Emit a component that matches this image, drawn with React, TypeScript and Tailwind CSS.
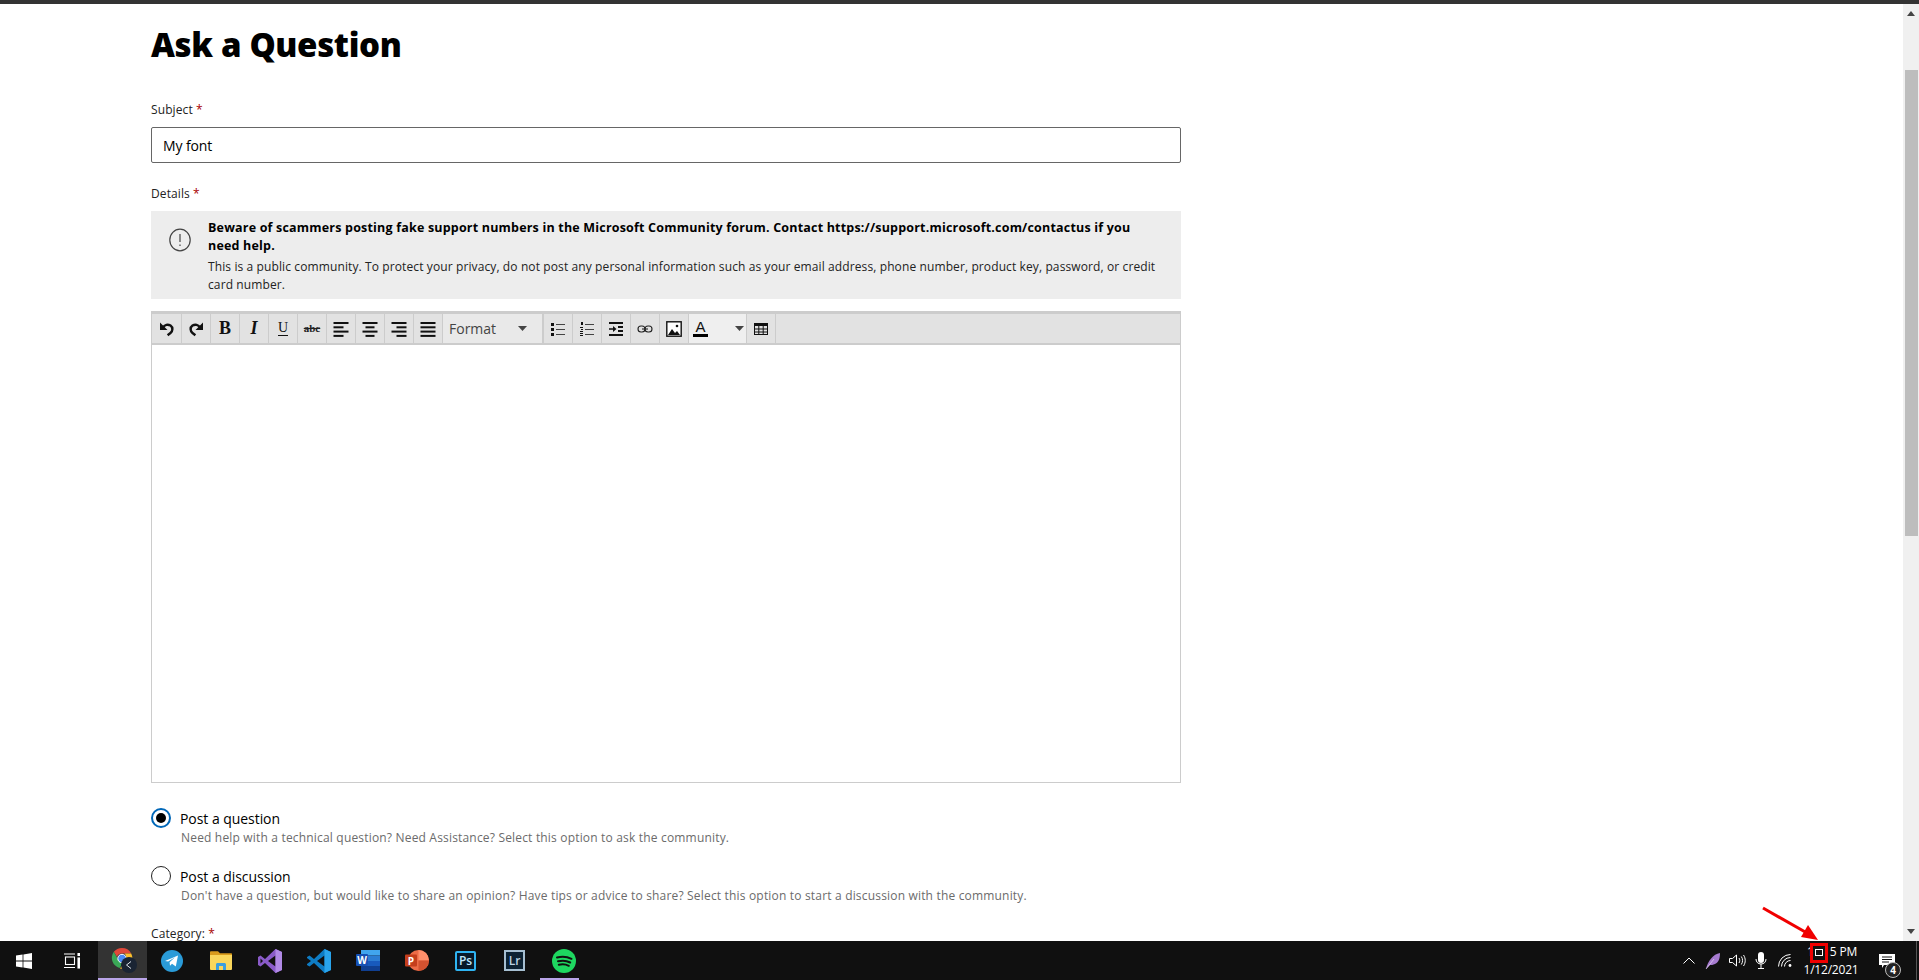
const Btn = ({ children, className = "" }: { children?: React.ReactNode; className?: string }) => (
  <div className={"flex h-full w-[29px] shrink-0 items-center justify-center border-r border-[#cccccc] " + className}>{children}</div>
);

const Caret = () => (
  <svg width="9" height="5" viewBox="0 0 10 6" preserveAspectRatio="none"><path d="M0 0h10L5 6z" fill="#444" /></svg>
);

const AlignIcon = ({ lines }: { lines: number[][] }) => (
  <svg width="16" height="16" viewBox="0 0 16 16" fill="#111">
    {lines.map((l, i) => (
      <rect key={i} x={l[0]} y={1 + i * 4.3} width={l[1]} height="2" />
    ))}
  </svg>
);

const Undo = ({ flip }: { flip?: boolean }) => (
  <svg width="16" height="16" viewBox="0 0 16 16" className={flip ? "-scale-x-100" : ""}>
    <path d="M1 1.500v7.500h7.500z" fill="#111" />
    <path d="M4 6.500C5.500 3.500 9 3 11.500 4.600c2.600 1.800 2.400 5.600 0 7.400L8.600 14.200" fill="none" stroke="#111" strokeWidth="2.400" />
  </svg>
);

const Toolbar = () => (
  <div className="flex h-[33px] items-center border-y-2 border-[#cccccc] bg-[#e2e2e2] pl-px">
    <Btn><Undo /></Btn>
    <Btn><Undo flip /></Btn>
    <Btn><span className="font-['Liberation_Serif',serif] text-[18px] font-bold text-[#111]">B</span></Btn>
    <Btn><span className="font-['Liberation_Serif',serif] text-[18px] font-bold italic text-[#111]">I</span></Btn>
    <Btn><span className="border-b border-[#111] font-['Liberation_Serif',serif] text-[14px] leading-[14px] text-[#111]">U</span></Btn>
    <Btn><span className="font-['Liberation_Serif',serif] text-[11px] font-bold text-[#222] line-through">abc</span></Btn>
    <Btn><AlignIcon lines={[[0.5, 15], [0.5, 10], [0.5, 15], [0.5, 10]]} /></Btn>
    <Btn><AlignIcon lines={[[0.5, 15], [3.5, 9], [0.5, 15], [3.5, 9]]} /></Btn>
    <Btn><AlignIcon lines={[[0.5, 15], [5.5, 10], [0.5, 15], [5.5, 10]]} /></Btn>
    <Btn><AlignIcon lines={[[0.5, 15], [0.5, 15], [0.5, 15], [0.5, 15]]} /></Btn>
    <div className="flex h-full w-[101px] shrink-0 items-center justify-between border-r-2 border-[#cccccc] bg-[#e9e9e9] pl-[6px] pr-[15px] text-[14px] text-[#444]">
      <span>Format</span>
      <Caret />
    </div>
    <Btn>
      <svg width="16" height="16" viewBox="0 0 16 16" fill="#111">
        <rect x="1" y="2" width="3" height="3" /><rect x="1" y="7" width="3" height="3" /><rect x="1" y="12" width="3" height="3" />
        <rect x="6" y="3" width="9" height="1" fill="#444" /><rect x="6" y="8" width="9" height="1" fill="#444" /><rect x="6" y="13" width="9" height="1" fill="#444" />
      </svg>
    </Btn>
    <Btn>
      <svg width="16" height="16" viewBox="0 0 16 16" fill="#111">
        <rect x="2" y="1" width="2" height="3" /><rect x="1" y="6" width="3" height="1" /><rect x="2" y="8" width="2" height="1" /><rect x="1" y="10" width="3" height="1" /><rect x="1" y="12" width="3" height="1" /><rect x="1" y="14" width="3" height="1" />
        <rect x="6" y="3" width="9" height="1" fill="#444" /><rect x="6" y="8" width="9" height="1" fill="#444" /><rect x="6" y="13" width="9" height="1" fill="#444" />
      </svg>
    </Btn>
    <Btn>
      <svg width="16" height="16" viewBox="0 0 16 16" fill="#111">
        <rect x="1" y="1" width="14" height="2" /><rect x="1" y="13" width="14" height="2" />
        <rect x="10" y="5" width="5" height="2" /><rect x="10" y="9" width="5" height="2" />
        <path d="M1 7.200h4V5l3.500 3L5 11V8.800H1z" />
      </svg>
    </Btn>
    <Btn>
      <svg width="16" height="16" viewBox="0 0 16 16" fill="none" stroke="#222" strokeWidth="1.100">
        <rect x="1" y="5" width="7" height="6" rx="3" /><rect x="8" y="5" width="7" height="6" rx="3" /><path d="M5 8h6" />
      </svg>
    </Btn>
    <Btn>
      <svg width="16" height="16" viewBox="0 0 16 16">
        <rect x="0.800" y="0.800" width="14.400" height="14.400" fill="#fff" stroke="#111" strokeWidth="1.400" />
        <path d="M2 14l4-6 3 4 2-2 3 4z" fill="#111" /><circle cx="11" cy="5" r="1.300" fill="#111" />
      </svg>
    </Btn>
    <div className="flex h-full w-[58px] shrink-0 items-center justify-between border-r border-[#cccccc] bg-[#efefef] pl-[4px] pr-[2px]">
      <span className="flex flex-col items-center leading-none">
        <span className="font-['Liberation_Sans',sans-serif] text-[15px] leading-[13px] text-[#111]">A</span>
        <span className="mt-[1px] h-[3px] w-[15px] bg-black" />
      </span>
      <Caret />
    </div>
    <Btn>
      <svg width="16" height="16" viewBox="0 0 16 16" fill="none" stroke="#111">
        <rect x="1.500" y="2.500" width="13" height="11" /><rect x="1" y="2" width="14" height="3" fill="#111" stroke="none" />
        <path d="M1.500 8h13M1.500 11h13M5.800 5v8M10.200 5v8" />
      </svg>
    </Btn>
  </div>
);

const Radio = ({ on, title, desc, className }: { on?: boolean; title: string; desc: string; className: string }) => (
  <div className={className}>
    <div className="flex items-center gap-[9px]">
      <span className={"flex h-5 w-5 items-center justify-center rounded-full border " + (on ? "border-2 border-[#0067b8]" : "border-[#222]")}>
        {on && <span className="h-[10px] w-[10px] rounded-full bg-black" />}
      </span>
      <span className="h-5 text-[14px] leading-[22px] tracking-[-0.05px] text-black">{title}</span>
    </div>
    <p className="ml-[30px] mt-[2px] text-[12px] leading-4 tracking-[0.18px] text-[#6b6b6b]">{desc}</p>
  </div>
);

const TaskIcon = ({ children, className = "" }: { children: React.ReactNode; className?: string }) => (
  <div className={"flex h-full w-[49px] shrink-0 items-center justify-center " + className}>{children}</div>
);

const Taskbar = () => (
  <div className="flex h-[39px] shrink-0 items-stretch bg-[#101010]">
    <div className="flex w-12 items-center justify-center">
      <svg width="16" height="16" viewBox="0 0 16 16" fill="#fff"><path d="M0 2.400l6.600-.9v6.100H0zM7.400 1.400L16 0v7.600H7.400zM0 8.400h6.600v6.100L0 13.600zM7.400 8.400H16V16l-8.600-1.400z" /></svg>
    </div>
    <div className="flex w-[50px] items-center justify-center pr-[3px]">
      <svg width="16" height="16" viewBox="0 0 16 16" fill="none" stroke="#fff" strokeWidth="1.100">
        <rect x="1.500" y="4" width="9" height="7.500" /><path d="M0 1h11M0 14.500h11" /><rect x="14" y="0.500" width="1.600" height="2" fill="#fff" /><rect x="14" y="5" width="1.600" height="10" fill="#fff" />
      </svg>
    </div>
    <TaskIcon className="border-b-2 border-[#b9a4e8] bg-[#333333]">
      <svg width="30" height="30" viewBox="0 0 30 30" className="ml-[2px]">
        <path d="M13 3a10.500 10.500 0 0 1 9.200 5.400H13a5 5 0 0 0-5 3.600L4.800 6.800A10.500 10.500 0 0 1 13 3z" fill="#e0483a" />
        <path d="M4.800 6.800 9.600 15.600a5 5 0 0 0 4 2.300l-3 5.100A10.500 10.500 0 0 1 4.800 6.800z" fill="#3aa757" />
        <path d="M22.200 8.400A10.500 10.500 0 0 1 11 23.500l5-8a5 5 0 0 0-.6-7.100z" fill="#fbc02d" />
        <circle cx="13" cy="13.500" r="4.200" fill="#4a8af4" stroke="#fff" strokeWidth="1" />
        <circle cx="20" cy="20" r="8" fill="#1a2433" />
        <path d="M22 16.500l-4.500 3.500 4.500 3.500" fill="none" stroke="#dfe6ee" strokeWidth="1" />
      </svg>
    </TaskIcon>
    <TaskIcon>
      <svg width="22" height="22" viewBox="0 0 22 22">
        <circle cx="11" cy="11" r="11" fill="#2a9bd8" />
        <path d="M4 11l13-5.500-2.200 11-3.800-2.800-2 2-.4-3.400 5.400-5-6.800 4.200z" fill="#fff" />
      </svg>
    </TaskIcon>
    <TaskIcon>
      <svg width="22" height="19" viewBox="0 0 22 19">
        <path d="M0 1.500C0 .8.500.3 1 .3h7l2 2h11c.600 0 1 .4 1 1V6H0z" fill="#d99b1c" />
        <path d="M0 4h22v14a1 1 0 0 1-1 1H1a1 1 0 0 1-1-1z" fill="#f9d65b" />
        <path d="M6 19v-5.500c0-1 .8-1.500 1.500-1.500h7c.8 0 1.500.6 1.500 1.500V19h-3v-4H9v4z" fill="#3b9ede" />
      </svg>
    </TaskIcon>
    <TaskIcon>
      <svg width="24" height="24" viewBox="0 0 24 24">
        <path d="M17.500 0 24 3v18l-6.500 3L7 14l-4.500 3.500L0 16V8l2.500-1.500L7 10z" fill="#8a5bc9" />
        <path d="M17.500 6.500v11L10 12z" fill="#101010" />
        <path d="M17.500 0 24 3v18l-6.500 3z" fill="#b18ae6" />
        <path d="M2.500 9.500v5L5 12z" fill="#101010" />
      </svg>
    </TaskIcon>
    <TaskIcon>
      <svg width="24" height="24" viewBox="0 0 24 24">
        <path d="M17.500 0 24 3v18l-6.500 3L7 14l-4.500 3.500L0 16v-1l4-3-4-3V8l2.500-1.500L7 10z" fill="#0e7cc4" />
        <path d="M17.500 6.500v11L10 12z" fill="#101010" />
        <path d="M17.500 0 24 3v18l-6.500 3z" fill="#29a4ec" />
      </svg>
    </TaskIcon>
    <TaskIcon>
      <svg width="24" height="21" viewBox="0 0 24 21">
        <rect x="5" y="0" width="19" height="5.500" fill="#41a5ee" /><rect x="5" y="5.500" width="19" height="5.500" fill="#2b7cd3" />
        <rect x="5" y="11" width="19" height="5" fill="#185abd" /><rect x="5" y="16" width="19" height="5" fill="#103f91" />
        <rect x="0" y="4" width="12" height="12" rx="1" fill="#1650b4" />
        <text x="6" y="14" textAnchor="middle" fontSize="10" fontWeight="700" fill="#fff" fontFamily="Open Sans">W</text>
      </svg>
    </TaskIcon>
    <TaskIcon>
      <svg width="24" height="21" viewBox="0 0 24 21">
        <circle cx="13.500" cy="10.500" r="10.500" fill="#ed6c47" /><path d="M13.500 0A10.500 10.500 0 0 1 24 10.500H13.500z" fill="#ff8f6b" /><path d="M13.500 10.500H24A10.500 10.500 0 0 1 13.500 21z" fill="#d35230" />
        <rect x="0" y="4.500" width="12" height="12" rx="1" fill="#c43e1c" />
        <text x="6" y="14.500" textAnchor="middle" fontSize="10" fontWeight="700" fill="#fff" fontFamily="Open Sans">P</text>
      </svg>
    </TaskIcon>
    <TaskIcon>
      <div className="flex h-5 w-[21px] items-center justify-center rounded-[2px] border-2 border-[#2fb4f2] bg-[#06182a] text-[12px] font-semibold text-[#bfe6fb]">Ps</div>
    </TaskIcon>
    <TaskIcon>
      <div className="flex h-[21px] w-[21px] items-center justify-center border-2 border-[#a6bfd1] bg-[#0c2233] text-[12px] font-semibold text-[#bcd2e2]">Lr</div>
    </TaskIcon>
    <TaskIcon className="relative">
      <span className="absolute bottom-0 left-[1px] right-[9px] h-[2px] bg-[#b9a4e8]" />
      <svg width="24" height="24" viewBox="0 0 24 24">
        <circle cx="12" cy="12" r="12" fill="#1ed760" />
        <path d="M5 8.500c5-1.400 10-1 14.500 1.300M6 12.300c4.300-1.100 8.500-.8 12.200 1.200M6.800 15.800c3.500-.9 7-.6 10 1" fill="none" stroke="#101010" strokeWidth="2" strokeLinecap="round" />
      </svg>
    </TaskIcon>

    <div className="ml-auto flex items-center text-white">
      <div className="flex w-6 justify-center">
        <svg width="12" height="7" viewBox="0 0 12 7" fill="none" stroke="#fff" strokeWidth="1"><path d="M.5 6.500 6 1l5.500 5.500" /></svg>
      </div>
      <div className="flex w-6 justify-center">
        <svg width="16" height="18" viewBox="0 0 16 18"><path d="M1 17C3 9 8 2 15 1c0 5-1 9-5 11-2 1-4 1-5 1z" fill="#a67bd0" /><path d="M1 17 9 7" stroke="#e6d9f2" strokeWidth=".7" /></svg>
      </div>
      <div className="flex w-6 justify-center">
        <svg width="17" height="13" viewBox="0 0 17 13" fill="none" stroke="#fff" strokeWidth="1"><path d="M.5 4.500h3L7.500 1v11l-4-3.500h-3zM10 4c1 1.500 1 3.500 0 5M12.300 2.500c1.700 2.500 1.700 5.500 0 8M14.500 1c2.300 3.400 2.300 7.600 0 11" /></svg>
      </div>
      <div className="flex w-6 justify-center">
        <svg width="12" height="17" viewBox="0 0 12 17"><rect x="3" y="0" width="6" height="11" rx="3" fill="#fff" /><path d="M1 7c0 3 2 5 5 5s5-2 5-5M6 12v4M3 16.500h6" fill="none" stroke="#fff" /></svg>
      </div>
      <div className="flex w-6 justify-center">
        <svg width="15" height="13" viewBox="0 0 15 13" fill="none" stroke="#fff" strokeWidth="1"><path d="M.5 12.500A12 12 0 0 1 12.500.5M3.500 12.500a9 9 0 0 1 9-9M6.500 12.500a6 6 0 0 1 6-6" /><circle cx="12" cy="11.500" r="1.400" fill="#fff" stroke="none" /></svg>
      </div>
      <div className="relative ml-[2px] w-[64px] text-center text-[12px] leading-[18px] tracking-[-0.2px]">
        <div className="pl-[2px]">11:15 PM</div>
        <div>1/12/2021</div>
        <div className="absolute left-[11px] top-[0px] flex h-5 w-[18px] items-center justify-center border-[3px] border-[#f00000] bg-[#101010]">
          <span className="h-[7px] w-2 border border-white" />
        </div>
      </div>
      <div className="relative flex w-[53px] justify-center pr-[5px]">
        <svg width="16" height="14" viewBox="0 0 16 14"><path d="M0 0h16v11H5l-2 3v-3H0z" fill="#fff" /><path d="M3 3h10M3 5.500h10M3 8h7" stroke="#101010" /></svg>
        <span className="absolute left-[22px] top-[8px] flex h-4 w-4 items-center justify-center rounded-full border border-[#bbb] bg-[#222] text-[10px] font-bold leading-none text-white">4</span>
      </div>
      <span className="mr-[2px] h-full w-px bg-[#555]" />
    </div>
  </div>
);

export default function App() {
  return (
    <div className="relative flex h-[980px] flex-col overflow-hidden bg-white font-['Open_Sans',sans-serif] text-black">
      <div className="h-1 shrink-0 bg-[#333333]" />
      <div className="flex min-h-0 flex-1">
        <main className="min-w-0 flex-1 overflow-hidden pl-[151px]">
          <div className="w-[1030px]">
            <h1 className="mt-[21px] h-10 text-[33px] font-extrabold leading-10 tracking-[-0.35px]">Ask a Question</h1>
            <label className="mt-[36px] block text-[12px] leading-[18px] tracking-[0.1px] text-[#222]">
              Subject <span className="text-[#a80000]">*</span>
            </label>
            <div className="mt-[8px] flex h-9 items-center rounded-[2px] border border-[#666] pl-[11px] text-[14px] tracking-[-0.1px]">My font</div>
            <label className="mt-[22px] block text-[12px] leading-[18px] tracking-[0.1px] text-[#222]">
              Details <span className="text-[#a80000]">*</span>
            </label>
            <div className="mt-[8px] flex h-[88px] bg-[#ededed] pt-2">
              <div className="flex w-[57px] shrink-0 justify-center pt-[9px]">
                <svg width="22" height="24" viewBox="0 0 22 24" fill="none" stroke="#444" strokeWidth="1.200">
                  <ellipse cx="11" cy="12" rx="10.200" ry="10.800" /><path d="M11 6v8" /><path d="M11 16.500v1.500" />
                </svg>
              </div>
              <div className="pr-5 text-[12px] leading-[18px]">
                <p className="pr-[8px] text-[12.5px] font-bold tracking-[0.19px]">
                  Beware of scammers posting fake support numbers in the Microsoft Community forum. Contact https://support.microsoft.com/contactus if you need help.
                </p>
                <p className="mt-[3px] tracking-[0.11px] text-[#222]">
                  This is a public community. To protect your privacy, do not post any personal information such as your email address, phone number, product key, password, or credit card number.
                </p>
              </div>
            </div>
            <div className="mt-3 flex h-[472px] flex-col border border-[#cccccc]">
              <Toolbar />
            </div>
            <Radio
              on
              className="mt-[25px]"
              title="Post a question"
              desc="Need help with a technical question? Need Assistance? Select this option to ask the community."
            />
            <Radio
              className="mt-5"
              title="Post a discussion"
              desc="Don't have a question, but would like to share an opinion? Have tips or advice to share? Select this option to start a discussion with the community."
            />
            <label className="mt-[21px] block text-[12px] leading-[18px] tracking-[0.1px] text-[#222]">
              Category: <span className="text-[#a80000]">*</span>
            </label>
          </div>
        </main>
        <div className="flex w-4 shrink-0 flex-col items-center bg-[#f0f0f0] pt-[7px]">
          <svg width="8" height="5" viewBox="0 0 8 5" className="shrink-0"><path d="M0 5h8L4 0z" fill="#444" /></svg>
          <div className="ml-px mt-[54px] h-[466px] w-[13px] shrink-0 bg-[#bdbdbd]" />
          <svg width="8" height="5" viewBox="0 0 8 5" className="mb-[7px] mt-auto shrink-0"><path d="M0 0h8L4 5z" fill="#444" /></svg>
        </div>
      </div>
      <Taskbar />
      {/* annotation arrow */}
      <svg className="pointer-events-none absolute left-[1755px] top-[900px]" width="70" height="45" viewBox="0 0 70 45">
        <path d="M8 8 52 33" stroke="#f00000" strokeWidth="3" fill="none" />
        <path d="M63 40 46 37 53 25z" fill="#f00000" />
      </svg>
    </div>
  );
}
